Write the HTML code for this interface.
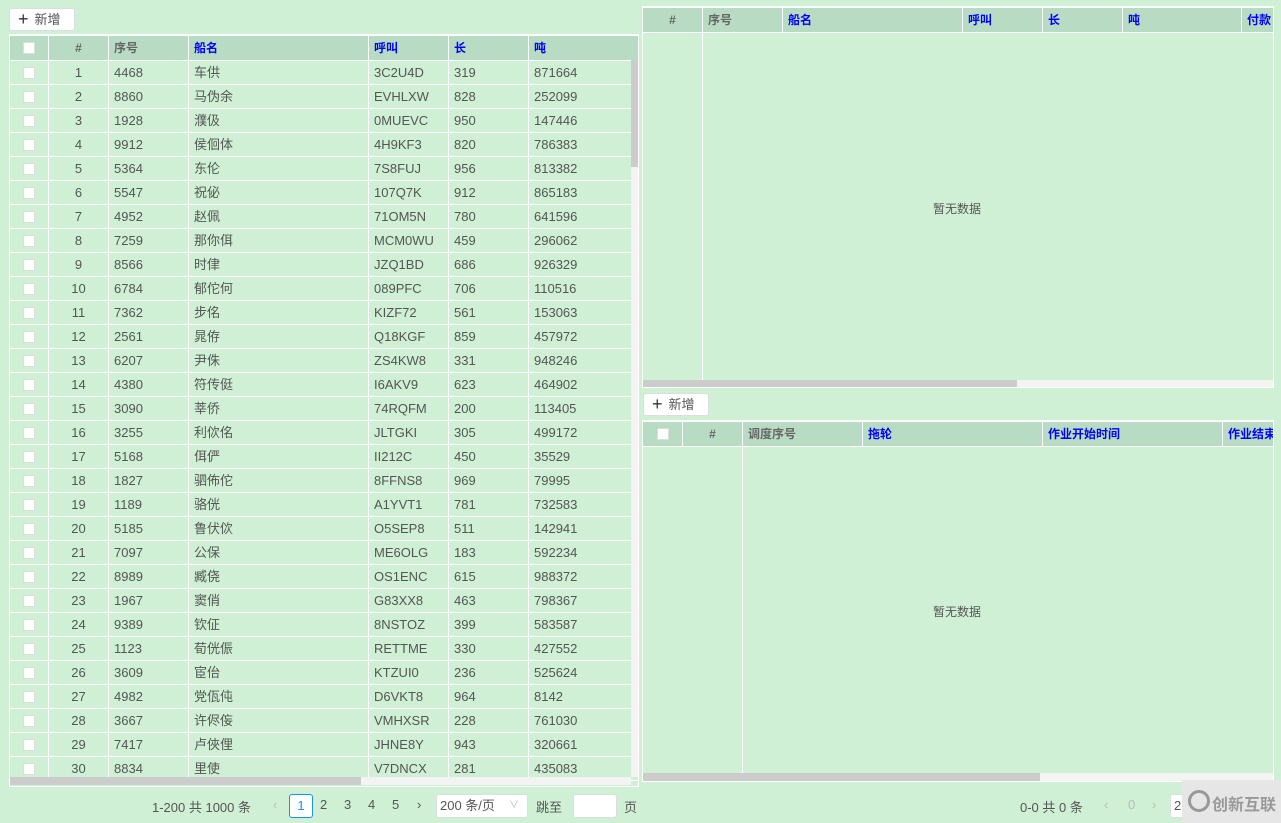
<!DOCTYPE html><html><head><meta charset="utf-8"><style>
*{box-sizing:border-box;margin:0;padding:0}
body{width:1281px;height:823px;background:#cff0d4;font-family:"Liberation Sans","Noto Sans CJK SC",sans-serif;font-size:13px;color:#555;position:relative;overflow:hidden}
.abs{position:absolute}
.btn{position:absolute;background:#fff;border:1px solid #ddd;border-radius:3px;height:23px;font-size:13px;color:#555;line-height:21px;padding-left:8px}
.btn b{font-weight:normal;font-size:18px;color:#333;margin-right:6px;vertical-align:-1px}
table{border-collapse:collapse;table-layout:fixed;position:absolute}
td,th{border:1px solid #fff;height:24px;padding:0 5px;font-weight:normal;text-align:left;white-space:nowrap;overflow:hidden;font-size:13px;line-height:22px}
th{background:#b8dcc3;height:25px;font-size:12px;font-weight:bold;color:#00f}
th.g{color:#666}
.c{text-align:center}
.cb{display:block;margin:0 auto;width:12px;height:12px;background:#fff;border:1px solid #ddd}
.sb{position:absolute;background:#f3f3f3}
.th{position:absolute;background:#ccc}
.empty{position:absolute;font-size:12px;color:#555}
.pg{position:absolute;top:797px;font-size:13px;color:#555}
</style></head><body>
<div class="btn" style="left:9px;top:8px;width:66px"><b>+</b>新增</div>
<div class="abs" style="left:9px;top:34px;width:630px;height:753px;border:1px solid #fff;overflow:hidden">
<table style="left:-1px;top:0;width:631px">
<colgroup><col style="width:39px"><col style="width:60px"><col style="width:80px"><col style="width:180px"><col style="width:80px"><col style="width:80px"><col style="width:112px"></colgroup>
<tr><th class="c"><span class="cb"></span></th><th class="c g">#</th><th class="g">序号</th><th>船名</th><th>呼叫</th><th>长</th><th>吨</th></tr>
<tr><td class="c"><span class="cb"></span></td><td class="c">1</td><td>4468</td><td>车供</td><td>3C2U4D</td><td>319</td><td>871664</td></tr>
<tr><td class="c"><span class="cb"></span></td><td class="c">2</td><td>8860</td><td>马伪余</td><td>EVHLXW</td><td>828</td><td>252099</td></tr>
<tr><td class="c"><span class="cb"></span></td><td class="c">3</td><td>1928</td><td>濮伋</td><td>0MUEVC</td><td>950</td><td>147446</td></tr>
<tr><td class="c"><span class="cb"></span></td><td class="c">4</td><td>9912</td><td>侯佪体</td><td>4H9KF3</td><td>820</td><td>786383</td></tr>
<tr><td class="c"><span class="cb"></span></td><td class="c">5</td><td>5364</td><td>东伦</td><td>7S8FUJ</td><td>956</td><td>813382</td></tr>
<tr><td class="c"><span class="cb"></span></td><td class="c">6</td><td>5547</td><td>祝佖</td><td>107Q7K</td><td>912</td><td>865183</td></tr>
<tr><td class="c"><span class="cb"></span></td><td class="c">7</td><td>4952</td><td>赵佩</td><td>71OM5N</td><td>780</td><td>641596</td></tr>
<tr><td class="c"><span class="cb"></span></td><td class="c">8</td><td>7259</td><td>那你佴</td><td>MCM0WU</td><td>459</td><td>296062</td></tr>
<tr><td class="c"><span class="cb"></span></td><td class="c">9</td><td>8566</td><td>时侓</td><td>JZQ1BD</td><td>686</td><td>926329</td></tr>
<tr><td class="c"><span class="cb"></span></td><td class="c">10</td><td>6784</td><td>郁佗何</td><td>089PFC</td><td>706</td><td>110516</td></tr>
<tr><td class="c"><span class="cb"></span></td><td class="c">11</td><td>7362</td><td>步佲</td><td>KIZF72</td><td>561</td><td>153063</td></tr>
<tr><td class="c"><span class="cb"></span></td><td class="c">12</td><td>2561</td><td>晁侟</td><td>Q18KGF</td><td>859</td><td>457972</td></tr>
<tr><td class="c"><span class="cb"></span></td><td class="c">13</td><td>6207</td><td>尹侏</td><td>ZS4KW8</td><td>331</td><td>948246</td></tr>
<tr><td class="c"><span class="cb"></span></td><td class="c">14</td><td>4380</td><td>符传侹</td><td>I6AKV9</td><td>623</td><td>464902</td></tr>
<tr><td class="c"><span class="cb"></span></td><td class="c">15</td><td>3090</td><td>莘侨</td><td>74RQFM</td><td>200</td><td>113405</td></tr>
<tr><td class="c"><span class="cb"></span></td><td class="c">16</td><td>3255</td><td>利佽佲</td><td>JLTGKI</td><td>305</td><td>499172</td></tr>
<tr><td class="c"><span class="cb"></span></td><td class="c">17</td><td>5168</td><td>佴俨</td><td>II212C</td><td>450</td><td>35529</td></tr>
<tr><td class="c"><span class="cb"></span></td><td class="c">18</td><td>1827</td><td>驷佈佗</td><td>8FFNS8</td><td>969</td><td>79995</td></tr>
<tr><td class="c"><span class="cb"></span></td><td class="c">19</td><td>1189</td><td>骆侊</td><td>A1YVT1</td><td>781</td><td>732583</td></tr>
<tr><td class="c"><span class="cb"></span></td><td class="c">20</td><td>5185</td><td>鲁伏佽</td><td>O5SEP8</td><td>511</td><td>142941</td></tr>
<tr><td class="c"><span class="cb"></span></td><td class="c">21</td><td>7097</td><td>公保</td><td>ME6OLG</td><td>183</td><td>592234</td></tr>
<tr><td class="c"><span class="cb"></span></td><td class="c">22</td><td>8989</td><td>臧侥</td><td>OS1ENC</td><td>615</td><td>988372</td></tr>
<tr><td class="c"><span class="cb"></span></td><td class="c">23</td><td>1967</td><td>窦俏</td><td>G83XX8</td><td>463</td><td>798367</td></tr>
<tr><td class="c"><span class="cb"></span></td><td class="c">24</td><td>9389</td><td>钦佂</td><td>8NSTOZ</td><td>399</td><td>583587</td></tr>
<tr><td class="c"><span class="cb"></span></td><td class="c">25</td><td>1123</td><td>荀侊侲</td><td>RETTME</td><td>330</td><td>427552</td></tr>
<tr><td class="c"><span class="cb"></span></td><td class="c">26</td><td>3609</td><td>宦佁</td><td>KTZUI0</td><td>236</td><td>525624</td></tr>
<tr><td class="c"><span class="cb"></span></td><td class="c">27</td><td>4982</td><td>党佤伅</td><td>D6VKT8</td><td>964</td><td>8142</td></tr>
<tr><td class="c"><span class="cb"></span></td><td class="c">28</td><td>3667</td><td>许侭侫</td><td>VMHXSR</td><td>228</td><td>761030</td></tr>
<tr><td class="c"><span class="cb"></span></td><td class="c">29</td><td>7417</td><td>卢俠俚</td><td>JHNE8Y</td><td>943</td><td>320661</td></tr>
<tr><td class="c"><span class="cb"></span></td><td class="c">30</td><td>8834</td><td>里使</td><td>V7DNCX</td><td>281</td><td>435083</td></tr>
</table>
<div class="sb" style="left:621px;top:25px;width:7px;height:717px"></div>
<div class="th" style="left:621px;top:25px;width:7px;height:107px"></div>
<div class="sb" style="left:0;top:742px;width:621px;height:8px"></div>
<div class="th" style="left:0;top:742px;width:351px;height:8px"></div>
</div>

<div class="abs" style="left:642px;top:6px;width:632px;height:382px;border:1px solid #fff;overflow:hidden">
<table style="left:-1px;top:0;width:700px">
<colgroup><col style="width:60px"><col style="width:80px"><col style="width:180px"><col style="width:80px"><col style="width:80px"><col style="width:119px"><col style="width:101px"></colgroup>
<tr><th class="c g">#</th><th class="g">序号</th><th>船名</th><th>呼叫</th><th>长</th><th>吨</th><th>付款</th></tr>
<tr><td style="height:348px"></td><td colspan="6"></td></tr>
</table>
<div class="sb" style="left:0;top:373px;width:632px;height:8px"></div>
<div class="th" style="left:0;top:373px;width:374px;height:8px"></div>
</div>
<div class="empty" style="left:933px;top:200px">暂无数据</div>

<div class="btn" style="left:643px;top:393px;width:66px"><b>+</b>新增</div>
<div class="abs" style="left:642px;top:420px;width:632px;height:362px;border:1px solid #fff;overflow:hidden">
<table style="left:-1px;top:0;width:760px">
<colgroup><col style="width:40px"><col style="width:60px"><col style="width:120px"><col style="width:180px"><col style="width:180px"><col style="width:180px"></colgroup>
<tr><th class="c"><span class="cb"></span></th><th class="c g">#</th><th class="g">调度序号</th><th>拖轮</th><th>作业开始时间</th><th>作业结束时间</th></tr>
<tr><td colspan="2" style="height:328px"></td><td colspan="4"></td></tr>
</table>
<div class="sb" style="left:0;top:352px;width:632px;height:8px"></div>
<div class="th" style="left:0;top:352px;width:397px;height:8px"></div>
</div>
<div class="empty" style="left:933px;top:603px">暂无数据</div>

<div class="pg" style="left:152px">1-200 共 1000 条</div>
<div class="pg" style="left:273px;color:#bbb">‹</div>
<div class="abs" style="left:289px;top:794px;width:24px;height:24px;border:1px solid #1890ff;border-radius:3px;background:#fff;color:#1890ff;text-align:center;line-height:22px">1</div>
<div class="pg" style="left:320px">2</div><div class="pg" style="left:344px">3</div><div class="pg" style="left:368px">4</div><div class="pg" style="left:392px">5</div>
<div class="pg" style="left:417px">›</div>
<div class="abs" style="left:436px;top:794px;width:92px;height:24px;background:#fff;border:1px solid #ddd;border-radius:3px;padding-left:3px;line-height:22px">200 条/页<span style="position:absolute;right:8px;color:#bbb;font-size:10px">∨</span></div>
<div class="pg" style="left:536px">跳至</div>
<div class="abs" style="left:573px;top:794px;width:44px;height:24px;background:#fff;border:1px solid #ddd;border-radius:3px"></div>
<div class="pg" style="left:624px">页</div>
<div class="pg" style="left:1020px">0-0 共 0 条</div>
<div class="pg" style="left:1104px;color:#bbb">‹</div>
<div class="pg" style="left:1128px;color:#bbb">0</div>
<div class="pg" style="left:1152px;color:#bbb">›</div>
<div class="abs" style="left:1170px;top:794px;width:30px;height:24px;background:#fff;border:1px solid #ddd;border-radius:3px;padding-left:3px;line-height:22px">2</div>
<div class="abs" style="left:1182px;top:780px;width:99px;height:43px;background:#e6e6e6;color:#999;font-size:16px;font-weight:bold;padding:11px 0 0 30px">创新互联<div style="position:absolute;left:6px;top:10px;width:22px;height:22px;border:3px solid #999;border-radius:50%"></div></div>
</body></html>
